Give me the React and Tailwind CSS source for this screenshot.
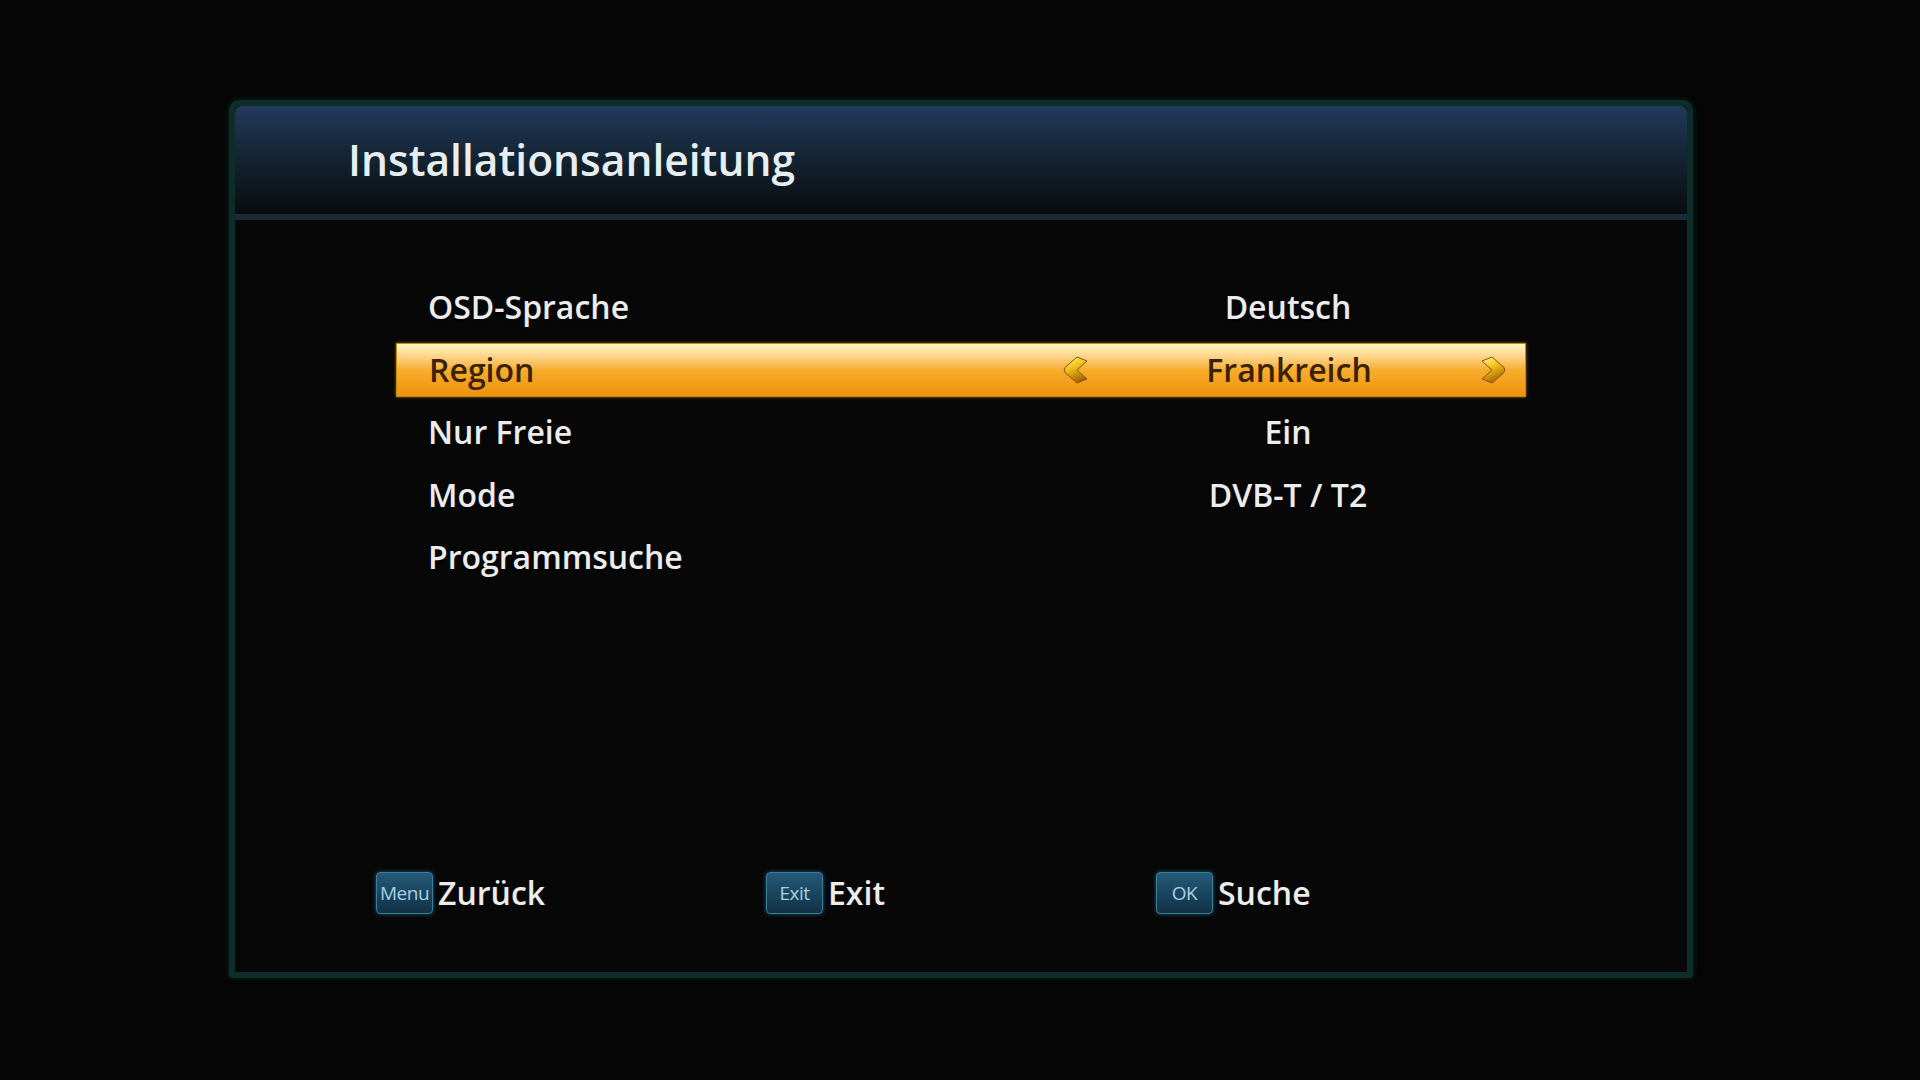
import React from "react"

const font = { fontFamily: '"Open Sans", "Noto Sans", sans-serif' }

function Arrow({ dir }) {
  const d =
    dir === "left"
      ? "M14 1 L24 5 L14 14 L24 23 L14 27 L2 16.5 Q0.5 14 2 11.5 Z"
      : "M12 1 L2 5 L12 14 L2 23 L12 27 L24 16.5 Q25.5 14 24 11.5 Z"
  const id = "g" + dir
  return (
    <svg width="26" height="28" viewBox="0 0 26 28" className="shrink-0">
      <defs>
        <linearGradient id={id} x1="0.2" y1="0" x2="0.6" y2="1">
          <stop offset="0" stopColor="#fff27e" />
          <stop offset="0.4" stopColor="#f2c21e" />
          <stop offset="1" stopColor="#a05e00" />
        </linearGradient>
      </defs>
      <path d={d} fill={`url(#${id})`} stroke="#8a5200" strokeWidth="1" strokeLinejoin="round" />
    </svg>
  )
}

function Row({ label, value, active }) {
  return (
    <div className="h-[62.5px] flex items-center">
      <div
        className={
          "w-[1130px] h-[54px] flex items-center pl-[32px] " +
          (active
            ? "bg-gradient-to-b from-[#fff6c8] via-[#f7ad2a] to-[#f0900c] border border-[#c58a10] shadow-[0_0_3px_#8a6000] text-[#3a2204]"
            : "text-[#ececec] [text-shadow:0_1px_2px_#000]")
        }
      >
        <div className="w-[634px] text-[32px] font-semibold leading-none">{label}</div>
        {active ? <Arrow dir="left" /> : <div className="w-[26px]" />}
        <div className="w-[382px] ml-[9px] text-center text-[32px] font-semibold leading-none">{value}</div>
        {active ? <Arrow dir="right" /> : <div className="w-[26px]" />}
      </div>
    </div>
  )
}

function Key({ label, text }) {
  return (
    <div className="w-[390px] flex items-center">
      <div className="w-[57px] h-[42px] rounded-[4px] border border-[#3c7f9c] bg-gradient-to-b from-[#245a7a] to-[#113246] shadow-[0_0_4px_#1e5a74] flex items-center justify-center text-[19px] text-[#a9d0e2] tracking-[-0.5px]">
        {label}
      </div>
      <div className="ml-[5px] text-[32px] font-semibold text-[#ececec] leading-none">{text}</div>
    </div>
  )
}

export default function App() {
  return (
    <div className="w-[1920px] h-[1080px] bg-[#050505] pt-[100px]" style={font}>
      <div className="ml-[229px] w-[1464px] h-[878px] border-[6px] border-[#0d2d29] rounded-t-[10px] rounded-b-[3px] bg-[#070707] shadow-[0_0_6px_#0a2422] flex flex-col">
        <div className="h-[114px] shrink-0 bg-gradient-to-b from-[#22395a] via-[#132332] to-[#080c0f] border-b-[6px] border-[#1a2b36] rounded-t-[6px] flex items-center pl-[113px]">
          <div className="text-[42.5px] font-semibold text-[#e8eef0] leading-none">Installationsanleitung</div>
        </div>
        <div className="pt-[56px] pl-[161px]">
          <Row label="OSD-Sprache" value="Deutsch" />
          <Row label="Region" value="Frankreich" active />
          <Row label="Nur Freie" value="Ein" />
          <Row label="Mode" value="DVB-T / T2" />
          <Row label="Programmsuche" value="" />
        </div>
        <div className="mt-auto mb-[58px] pl-[141px] flex">
          <Key label="Menu" text="Zurück" />
          <Key label="Exit" text="Exit" />
          <Key label="OK" text="Suche" />
        </div>
      </div>
    </div>
  )
}
